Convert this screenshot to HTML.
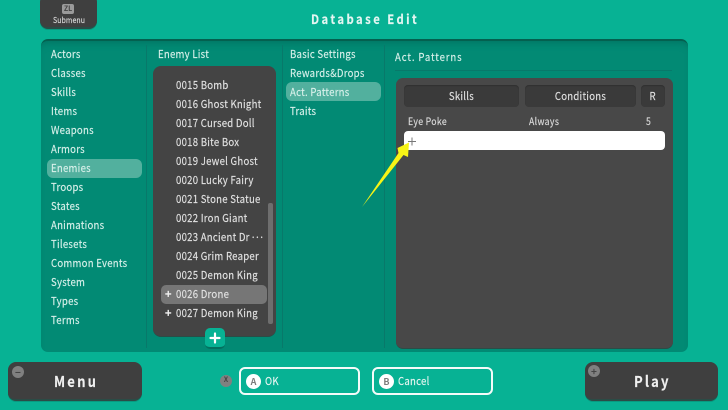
<!DOCTYPE html>
<html><head><meta charset="utf-8">
<style>
html,body{margin:0;padding:0}
body{width:728px;height:410px;overflow:hidden;background:#07b294;position:relative;font-family:"Noto Sans CJK JP","Liberation Sans",sans-serif;color:#e8f5f1}
div{position:absolute;box-sizing:border-box}
.t{white-space:nowrap;font-size:11px;line-height:14px;letter-spacing:.3px;height:14px;transform:scaleX(.87);transform-origin:left center;-webkit-text-stroke:.15px currentColor}
.l{color:#d8f0ea}
.e{color:#e2e2e2;left:176px}
.s{font-size:10px;letter-spacing:.4px}
.pl{left:165px;font-size:11px;font-weight:bold;color:#f2f2f2;transform:none}
.dark{background:#3f3f3f;border-radius:8px;border-bottom:2px solid #2b4c46;box-shadow:0 1px 0 #089a80}
.hb{background:#3a3a3a;border-radius:4px;height:22px;top:85px;color:#e0e0e0;text-align:center;line-height:22px;font-size:11px;letter-spacing:.3px;box-shadow:inset 0 1px 1px #303030}
.hb span{display:inline-block;transform:scaleX(.87);-webkit-text-stroke:.15px currentColor}
.sep{width:1px;background:#08796a}
.bb{top:367px;height:28px;border:2px solid #f4fbf9;border-radius:6px;color:#dff4ef}
.cc{border-radius:50%;background:#fff;color:#7c7c7c;width:15px;height:15px;font-size:9px;font-weight:bold;line-height:15px;text-align:center}
.gc{border-radius:50%;background:#808080;color:#444;width:12px;height:12px;font-size:10px;line-height:11px;text-align:center;font-weight:bold}
</style></head><body>

<div class="dark" style="left:40px;top:-6px;width:57px;height:35px;background:#3f3f3f"></div>
<div style="left:62px;top:4px;width:12px;height:10px;background:#9a9a9a;border-radius:2px;color:#444;font-size:7px;line-height:10px;text-align:center;font-weight:bold">ZL</div>
<div class="t" style="left:53px;top:14px;font-size:8px;letter-spacing:.1px;color:#d8d8d8">Submenu</div>

<div class="t" style="left:311px;top:11px;font-size:13px;font-weight:bold;letter-spacing:2.8px;color:#e4f6f2;height:16px;line-height:16px">Database Edit</div>

<div style="left:41px;top:39px;width:647px;height:313px;background:#028a74;border-radius:7px;border-top:2px solid #04604f;box-shadow:inset 0 6px 8px -5px #02705f"></div>
<div class="sep" style="left:146px;top:45px;height:303px"></div>
<div class="sep" style="left:282px;top:45px;height:303px"></div>
<div class="sep" style="left:384px;top:45px;height:303px"></div>
<div class="sep" style="left:395px;top:70px;height:1px;width:277px"></div>

<div style="left:47px;top:159px;width:95px;height:19px;background:#52b09e;border-radius:6px"></div>
<div class="t l" style="left:51px;top:47px">Actors</div>
<div class="t l" style="left:51px;top:66px">Classes</div>
<div class="t l" style="left:51px;top:85px">Skills</div>
<div class="t l" style="left:51px;top:104px">Items</div>
<div class="t l" style="left:51px;top:123px">Weapons</div>
<div class="t l" style="left:51px;top:142px">Armors</div>
<div class="t l" style="left:51px;top:161px">Enemies</div>
<div class="t l" style="left:51px;top:180px">Troops</div>
<div class="t l" style="left:51px;top:199px">States</div>
<div class="t l" style="left:51px;top:218px">Animations</div>
<div class="t l" style="left:51px;top:237px">Tilesets</div>
<div class="t l" style="left:51px;top:256px">Common Events</div>
<div class="t l" style="left:51px;top:275px">System</div>
<div class="t l" style="left:51px;top:294px">Types</div>
<div class="t l" style="left:51px;top:313px">Terms</div>

<div class="t l" style="left:158px;top:47px">Enemy List</div>
<div style="left:153px;top:66px;width:123px;height:271px;background:#444;border-radius:8px;border-bottom:1px solid #2b4c46"></div>
<div style="left:161px;top:285px;width:106px;height:19px;background:#767676;border-radius:5px"></div>
<div style="left:268px;top:203px;width:5px;height:121px;background:#6e6e6e;border-radius:2px"></div>
<div class="t e" style="top:78px">0015 Bomb</div>
<div class="t e" style="top:97px">0016 Ghost Knight</div>
<div class="t e" style="top:116px">0017 Cursed Doll</div>
<div class="t e" style="top:135px">0018 Bite Box</div>
<div class="t e" style="top:154px">0019 Jewel Ghost</div>
<div class="t e" style="top:173px">0020 Lucky Fairy</div>
<div class="t e" style="top:192px">0021 Stone Statue</div>
<div class="t e" style="top:211px">0022 Iron Giant</div>
<div class="t e" style="top:230px">0023 Ancient Dr<span style="letter-spacing:-1.300px;margin-left:1px">···</span></div>
<div class="t e" style="top:249px">0024 Grim Reaper</div>
<div class="t e" style="top:268px">0025 Demon King</div>
<div class="t e" style="top:287px">0026 Drone</div>
<div class="t e" style="top:306px">0027 Demon King</div>
<div class="t pl" style="top:287px">+</div>
<div class="t pl" style="top:306px">+</div>
<div style="left:205px;top:328px;width:20px;height:21px;background:#07b294;border-radius:5px;border-bottom:2px solid #04705f"></div>
<svg style="position:absolute;left:209px;top:332px" width="12" height="12"><path d="M6 1.500V10.500M1.500 6H10.500" stroke="#fff" stroke-width="2.200" stroke-linecap="round"/></svg>

<div class="t l" style="left:290px;top:47px">Basic Settings</div>
<div class="t l" style="left:290px;top:66px">Rewards&amp;Drops</div>
<div style="left:286px;top:82px;width:95px;height:19px;background:#52b09e;border-radius:6px"></div>
<div class="t l" style="left:290px;top:85px">Act. Patterns</div>
<div class="t l" style="left:290px;top:104px">Traits</div>
<div class="t l" style="left:395px;top:50px;letter-spacing:1px">Act. Patterns</div>

<div style="left:396px;top:78px;width:277px;height:271px;background:#484848;border-radius:7px;border-bottom:1px solid #2b4c46"></div>
<div class="hb" style="left:404px;width:115px"><span>Skills</span></div>
<div class="hb" style="left:525px;width:111px"><span>Conditions</span></div>
<div class="hb" style="left:641px;width:24px"><span>R</span></div>
<div class="t s" style="left:408px;top:114px;color:#dcdcdc">Eye Poke</div>
<div class="t s" style="left:529px;top:114px;color:#dcdcdc">Always</div>
<div class="t s" style="left:646px;top:114px;color:#dcdcdc">5</div>
<div style="left:404px;top:131px;width:261px;height:19px;background:#fff;border-radius:4px"></div>
<svg style="position:absolute;left:0;top:0" width="728" height="410">
<path d="M408 141.500H416M412 137.500V145.500" stroke="#777" stroke-width="1" fill="none"/>
<path d="M362 207L398.500 153L397.500 148L409 142.500L408 157L403.500 155Z" fill="#f7f416"/>
</svg>

<div class="dark" style="left:8px;top:362px;width:134px;height:39px"></div>
<div class="gc" style="left:12px;top:366px">−</div>
<div class="t" style="left:54px;top:372px;font-size:15px;font-weight:bold;letter-spacing:2.500px;height:20px;line-height:20px;color:#f0f0f0">Menu</div>

<div class="gc" style="left:220px;top:375px;font-size:7px">X</div>
<div class="bb" style="left:239px;width:121px"></div>
<div class="cc" style="left:246px;top:373.500px">A</div>
<div class="t" style="left:265px;top:374px">OK</div>
<div class="bb" style="left:372px;width:121px"></div>
<div class="cc" style="left:379px;top:373.500px">B</div>
<div class="t" style="left:398px;top:374px">Cancel</div>

<div class="dark" style="left:585px;top:362px;width:133px;height:39px"></div>
<div class="gc" style="left:588px;top:365px">+</div>
<div class="t" style="left:634px;top:372px;font-size:15px;font-weight:bold;letter-spacing:2.500px;height:20px;line-height:20px;color:#f0f0f0">Play</div>

</body></html>
